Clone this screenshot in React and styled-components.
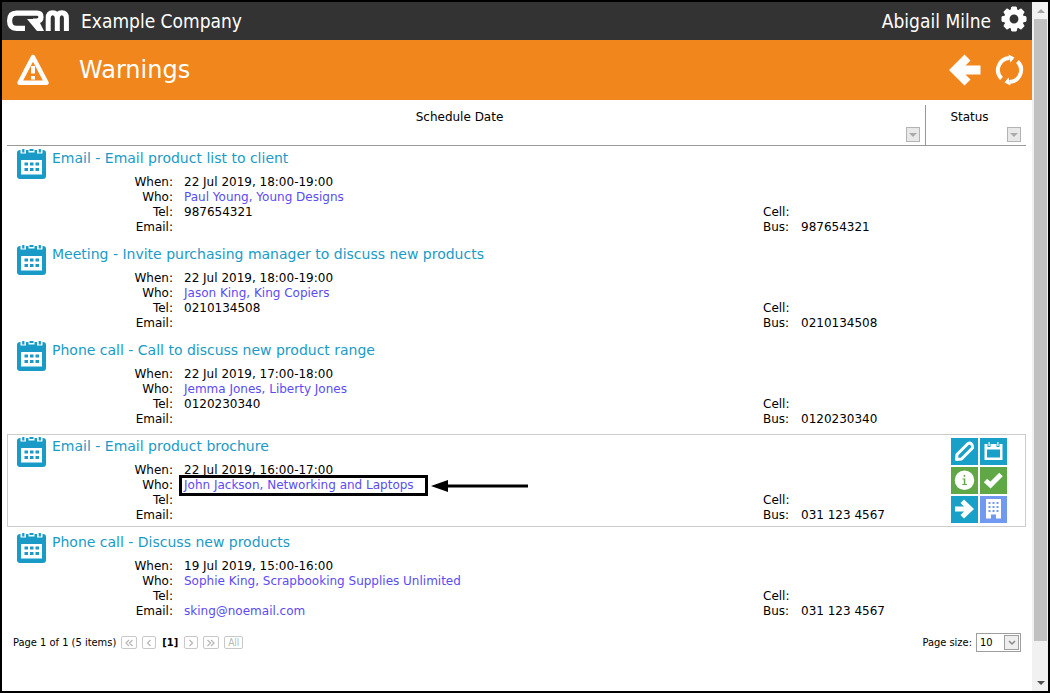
import React from 'react';
import styled, { createGlobalStyle } from 'styled-components';

const GlobalStyle = createGlobalStyle`
  * {
    box-sizing: border-box;
  }

  body {
    margin: 0;
    background: #fff;
    color: #000;
    font-family: Verdana, 'DejaVu Sans', sans-serif;
    font-size: 12px;
    line-height: 15px;
  }
`;

const compactFont = "Tahoma, 'DejaVu Sans Condensed', 'DejaVu Sans', sans-serif";

const Window = styled.div`
  display: flex;
  min-height: 100vh;
  border: 2px solid #000;
`;

const Main = styled.main`
  flex: 1;
  min-width: 0;
`;

const TopBar = styled.header`
  display: flex;
  align-items: center;
  height: 38px;
  padding: 0 5px;
  background: #333;
  color: #fff;
  font-family: ${compactFont};
  font-size: 19px;
  line-height: 24px;
`;

const Company = styled.span`
  flex: 1;
  margin-left: 12px;
`;

const IconButton = styled.button`
  display: flex;
  padding: 0;
  border: 0;
  background: none;
  color: #fff;
  cursor: pointer;
`;

const SettingsButton = styled(IconButton)`
  padding-bottom: 4px;
`;

const UserName = styled.span`
  margin-right: 10px;
`;

const TitleBar = styled.div`
  display: flex;
  align-items: center;
  gap: 14px;
  height: 60px;
  padding: 0 7px 0 15px;
  background: #f0861c;
  color: #fff;
`;

const PageTitle = styled.h1`
  flex: 1;
  margin: 0 0 0 16px;
  font-size: 24px;
  font-weight: normal;
  line-height: 30px;
`;

const Content = styled.div`
  padding: 5px 6px 0 5px;
`;

const Grid = styled.table`
  display: block;
`;

const GridHead = styled.thead`
  display: block;
`;

const GridBody = styled.tbody`
  display: block;
`;

const HeadRow = styled.tr`
  display: grid;
  grid-template-columns: 1fr 101px;
  height: 41px;
  border-bottom: 1px solid #999;
`;

const HeadCell = styled.th`
  display: flex;
  flex-direction: column;
  justify-content: space-between;
  padding: 5px 5px 3px;
  font-weight: normal;
  text-align: center;

  & + & {
    border-left: 1px solid #999;
  }
`;

const HeadLabel = styled.span`
  padding-right: 13px;
`;

const FilterButton = styled.button`
  display: flex;
  align-self: flex-end;
  align-items: center;
  justify-content: center;
  width: 14px;
  height: 15px;
  padding: 0;
  border: 1px solid #b4b4b4;
  background: #e8e8e8;
`;

const Row = styled.tr`
  display: grid;
  grid-template-columns: 1fr 101px;
  height: 93px;
  margin-bottom: 3px;
  border: 1px solid ${({ $selected }) => ($selected ? '#ccc' : 'transparent')};
`;

const ScheduleCell = styled.td`
  display: flex;
  gap: 5px;
  padding: 2px 0 0 9px;
`;

const ScheduleBody = styled.div`
  flex: 1;
`;

const ScheduleTitle = styled.a`
  display: block;
  margin-bottom: 8px;
  color: #1a9bc7;
  font-size: 14px;
  line-height: 18px;
  text-decoration: none;
`;

const Details = styled.div`
  display: grid;
  grid-template-columns: 121px 1fr 27px 123px;
  column-gap: 11px;
`;

const Label = styled.span`
  grid-column: ${({ $col }) => $col};
  text-align: ${({ $col }) => ($col === 1 ? 'right' : 'left')};
  white-space: nowrap;
`;

const Value = styled.span`
  position: relative;
  grid-column: ${({ $col }) => $col};
  justify-self: start;
  min-height: 15px;
`;

const TextLink = styled.a`
  color: #5b4bf5;
  text-decoration: none;
`;

const Highlight = styled.span`
  position: absolute;
  inset: -3px -14px -3px -5px;
  border: 3px solid #000;
  pointer-events: none;
`;

const Pointer = styled.svg`
  position: absolute;
  top: 1px;
  left: calc(100% + 17px);
`;

const StatusCell = styled.td`
  padding: 3px 0 0 27px;
`;

const Actions = styled.div`
  display: grid;
  grid-template-columns: 27px 27px;
  gap: 2px;
`;

const ActionButton = styled.button`
  display: flex;
  width: 27px;
  height: 27px;
  padding: 0;
  border: 0;
  background: ${({ $color }) => $color};
  cursor: pointer;
`;

const Footer = styled.footer`
  display: flex;
  align-items: center;
  justify-content: space-between;
  padding: 7px 5px 0 6px;
  font-family: ${compactFont};
  font-size: 11px;
`;

const Pager = styled.nav`
  display: flex;
  align-items: center;
  gap: 5px;
`;

const PageButton = styled.button`
  display: flex;
  align-items: center;
  justify-content: center;
  min-width: 14px;
  height: 13px;
  padding: 0 3px;
  border: 1px solid #c8c8c8;
  border-radius: 2px;
  background: #fff;
  color: #b8b8b8;
  font-family: inherit;
  font-size: 10px;
  line-height: 11px;
`;

const CurrentPage = styled.strong`
  padding: 0 1px;
`;

const PageSize = styled.label`
  display: flex;
  align-items: center;
  gap: 4px;
`;

const SelectBox = styled.span`
  position: relative;
  display: flex;
`;

const Select = styled.select`
  width: 45px;
  height: 19px;
  padding: 0 3px;
  border: 1px solid #9f9f9f;
  border-radius: 0;
  background: #fff;
  color: #000;
  font: inherit;
  appearance: none;
`;

const SelectArrow = styled.span`
  position: absolute;
  top: 2px;
  right: 2px;
  display: flex;
  align-items: center;
  justify-content: center;
  width: 15px;
  height: 15px;
  border: 1px solid #9f9f9f;
  background: #eee;
  pointer-events: none;
`;

const ScrollTrack = styled.div`
  display: flex;
  flex-direction: column;
  width: 16px;
  padding: 0 1px 0 2px;
  background: #f1f1f1;
`;

const ScrollArrow = styled.div`
  display: flex;
  align-items: center;
  justify-content: center;
  height: 17px;
`;

const ScrollRail = styled.div`
  flex: 1;
`;

const ScrollThumb = styled.div`
  height: 95%;
  background: #c1c1c1;
`;

const items = [
  {
    title: 'Email - Email product list to client',
    when: '22 Jul 2019, 18:00-19:00',
    who: 'Paul Young, Young Designs',
    tel: '987654321',
    bus: '987654321',
  },
  {
    title: 'Meeting - Invite purchasing manager to discuss new products',
    when: '22 Jul 2019, 18:00-19:00',
    who: 'Jason King, King Copiers',
    tel: '0210134508',
    bus: '0210134508',
  },
  {
    title: 'Phone call - Call to discuss new product range',
    when: '22 Jul 2019, 17:00-18:00',
    who: 'Jemma Jones, Liberty Jones',
    tel: '0120230340',
    bus: '0120230340',
  },
  {
    title: 'Email - Email product brochure',
    when: '22 Jul 2019, 16:00-17:00',
    who: 'John Jackson, Networking and Laptops',
    bus: '031 123 4567',
    selected: true,
  },
  {
    title: 'Phone call - Discuss new products',
    when: '19 Jul 2019, 15:00-16:00',
    who: 'Sophie King, Scrapbooking Supplies Unlimited',
    email: 'sking@noemail.com',
    bus: '031 123 4567',
  },
];

const Logo = () => (
  <svg width="62" height="22" viewBox="0 0 62 22" fill="none" stroke="#fff" strokeWidth="5.2">
    <path d="M18 18.400H9.500Q2.600 18.400 2.600 10.800T9.500 3.200H30Q34 3.200 34 7T30 11H26" />
    <path d="M20 9H31L37 21H30Z" fill="#fff" stroke="none" />
    <path d="M41.200 21V8Q41.200 2.800 45.700 2.800T50.300 8V21M50.300 8Q50.300 2.800 54.800 2.800T59.400 8V21" strokeWidth="5" />
  </svg>
);

const GearIcon = () => (
  <svg width="26" height="26" viewBox="0 0 26 26" fill="none" stroke="#fff">
    <circle cx="13" cy="13" r="7.200" strokeWidth="5.500" />
    {[0, 45, 90, 135, 180, 225, 270, 315].map((angle) => (
      <path key={angle} d="M10 4.500L10.800 1H15.200L16 4.500Z" fill="#fff" strokeWidth="1" strokeLinejoin="round" transform={`rotate(${angle} 13 13)`} />
    ))}
  </svg>
);

const WarningIcon = () => (
  <svg width="32" height="32" viewBox="0 0 32 32" fill="none" stroke="#fff" strokeLinejoin="round">
    <path d="M16 3L29.500 28.800H2.500Z" strokeWidth="4.400" />
    <path d="M16 12V19.500M16 22V25.500" strokeWidth="4" />
  </svg>
);

const BackIcon = () => (
  <svg width="32" height="32" viewBox="0 0 32 32" fill="#fff">
    <path d="M0 16L15.500 0.500L21.500 6.500L16.500 11.500H31.500V20.500H16.500L21.500 25.500L15.500 31.500Z" />
  </svg>
);

const RefreshIcon = () => (
  <svg width="30" height="32" viewBox="0 0 30 32" fill="none">
    <path d="M6.500 24.500A12 12 0 0 1 14.500 4M22.500 7.500A12 12 0 0 1 14.500 28" stroke="#fff" strokeWidth="4" />
    <path d="M13.500 0.500L19.500 3.500L15.500 8.500ZM15.500 31.500L9.500 28.500L13.500 23.500Z" fill="#fff" />
  </svg>
);

const CalendarIcon = () => (
  <svg width="30" height="31" viewBox="0 0 30 31">
    <rect y="1" width="29" height="29" rx="3" fill="#1a9bc7" />
    <rect x="4" y="11" width="21" height="14.500" fill="#fff" />
    <path d="M3.500 0H9V4.500H3.500ZM20 0H25.500V4.500H20ZM11.500 0H17.500V3.500H11.500Z" fill="#fff" />
    <path d="M5.200 0H7.400V3.500H5.200ZM21.700 0H23.900V3.500H21.700ZM12.500 0H16.500V2H12.500Z" fill="#1a9bc7" />
    <path d="M7.500 13.500H11V16.500H7.500ZM13 13.500H16.500V16.500H13ZM18.500 13.500H22V16.500H18.500ZM7.500 19H11V22H7.500ZM13 19H16.500V22H13ZM18.500 19H22V22H18.500Z" fill="#1a9bc7" />
  </svg>
);

const actions = [
  {
    name: 'Edit',
    color: '#18a0c9',
    icon: <path d="M5.500 21.500L6 16.500L17 5.500Q19 4.500 20.500 6T21.500 10L10.500 21Z" fill="none" stroke="#fff" strokeWidth="3" strokeLinejoin="round" />,
  },
  {
    name: 'Reschedule',
    color: '#18a0c9',
    icon: <path d="M4.500 6H7.500V9H10.500V6H16.500V9H19.500V6H22.500V22H4.500ZM7 11.500V19.500H20V11.500ZM8.500 4H9.700V8H8.500ZM17.300 4H18.500V8H17.300Z" fill="#fff" fillRule="evenodd" />,
  },
  {
    name: 'Information',
    color: '#5fa845',
    icon: <path d="M13.500 3.500A9.700 9.700 0 1 1 13.500 23A9.700 9.700 0 1 1 13.500 3.500ZM12.700 8V9.800H14.300V8ZM11.500 11.500V12.500H12.800V17H11.200V18H16V17H14.300V11.500Z" fill="#fff" fillRule="evenodd" />,
  },
  {
    name: 'Complete',
    color: '#5fa845',
    icon: <path d="M5.500 13.500L10.500 18L21 7.500" fill="none" stroke="#fff" strokeWidth="5" />,
  },
  {
    name: 'Follow up',
    color: '#18a0c9',
    icon: <path d="M4 10.500H13L9.500 7L13 3.500L23 13L13 22.500L9.500 19L13 15.500H4Z" fill="#fff" />,
  },
  {
    name: 'Company',
    color: '#7299f2',
    icon: <path d="M6 3H21V22.500H16V18.500H11V22.500H6ZM8.500 6H10.500V8H8.500ZM12.500 6H14.500V8H12.500ZM16.500 6H18.500V8H16.500ZM8.500 10H10.500V12H8.500ZM12.500 10H14.500V12H12.500ZM16.500 10H18.500V12H16.500ZM8.500 14H10.500V16H8.500ZM12.500 14H14.500V16H12.500ZM16.500 14H18.500V16H16.500Z" fill="#fff" fillRule="evenodd" />,
  },
];

const Filter = ({ label }) => (
  <FilterButton type="button" aria-label={label}>
    <svg width="8" height="4" viewBox="0 0 8 4"><path d="M0 0H8L4 4Z" fill="#aaa" /></svg>
  </FilterButton>
);

const Chevrons = ({ d, width = 8 }) => (
  <svg width={width} height="8" viewBox={`0 0 ${width} 8`} fill="none" stroke="#b8b8b8" strokeWidth="1.300">
    <path d={d} />
  </svg>
);

function ScheduleRow({ item }) {
  return (
    <Row $selected={item.selected}>
      <ScheduleCell>
        <CalendarIcon />
        <ScheduleBody>
          <ScheduleTitle href="#schedule">{item.title}</ScheduleTitle>
          <Details>
            <Label $col={1}>When:</Label>
            <Value $col={2}>{item.when}</Value>
            <Label $col={1}>Who:</Label>
            <Value $col={2}>
              <TextLink href="#contact">{item.who}</TextLink>
              {item.selected && (
                <>
                  <Highlight />
                  <Pointer width="97" height="14" viewBox="0 0 97 14">
                    <path d="M0 7L17 1V5.500H97V8.500H17V13Z" />
                  </Pointer>
                </>
              )}
            </Value>
            <Label $col={1}>Tel:</Label>
            <Value $col={2}>{item.tel}</Value>
            <Label $col={3}>Cell:</Label>
            <Label $col={1}>Email:</Label>
            <Value $col={2}>{item.email && <TextLink href={`mailto:${item.email}`}>{item.email}</TextLink>}</Value>
            <Label $col={3}>Bus:</Label>
            <Value $col={4}>{item.bus}</Value>
          </Details>
        </ScheduleBody>
      </ScheduleCell>
      <StatusCell>
        {item.selected && (
          <Actions>
            {actions.map((action) => (
              <ActionButton key={action.name} type="button" aria-label={action.name} $color={action.color}>
                <svg width="27" height="27" viewBox="0 0 27 27">{action.icon}</svg>
              </ActionButton>
            ))}
          </Actions>
        )}
      </StatusCell>
    </Row>
  );
}

function App() {
  return (
    <>
      <GlobalStyle />
      <Window>
        <Main>
          <TopBar>
            <Logo />
            <Company>Example Company</Company>
            <UserName>Abigail Milne</UserName>
            <SettingsButton type="button" aria-label="Settings"><GearIcon /></SettingsButton>
          </TopBar>
          <TitleBar>
            <WarningIcon />
            <PageTitle>Warnings</PageTitle>
            <IconButton type="button" aria-label="Back"><BackIcon /></IconButton>
            <IconButton type="button" aria-label="Refresh"><RefreshIcon /></IconButton>
          </TitleBar>
          <Content>
            <Grid>
              <GridHead>
                <HeadRow>
                  <HeadCell scope="col">
                    <HeadLabel>Schedule Date</HeadLabel>
                    <Filter label="Filter by schedule date" />
                  </HeadCell>
                  <HeadCell scope="col">
                    <HeadLabel>Status</HeadLabel>
                    <Filter label="Filter by status" />
                  </HeadCell>
                </HeadRow>
              </GridHead>
              <GridBody>
                {items.map((item) => (
                  <ScheduleRow key={item.title} item={item} />
                ))}
              </GridBody>
            </Grid>
            <Footer>
              <Pager aria-label="Pages">
                <span>Page 1 of 1 (5 items)</span>
                <PageButton type="button" aria-label="First page"><Chevrons d="M4 1L1 4L4 7M7.500 1L4.500 4L7.500 7" /></PageButton>
                <PageButton type="button" aria-label="Previous page"><Chevrons width={6} d="M4.500 1L1.500 4L4.500 7" /></PageButton>
                <CurrentPage>[1]</CurrentPage>
                <PageButton type="button" aria-label="Next page"><Chevrons width={6} d="M1.500 1L4.500 4L1.500 7" /></PageButton>
                <PageButton type="button" aria-label="Last page"><Chevrons d="M0.500 1L3.500 4L0.500 7M4 1L7 4L4 7" /></PageButton>
                <PageButton type="button">All</PageButton>
              </Pager>
              <PageSize>
                Page size:
                <SelectBox>
                  <Select defaultValue="10">
                    <option>10</option>
                    <option>20</option>
                    <option>50</option>
                  </Select>
                  <SelectArrow>
                    <svg width="8" height="6" viewBox="0 0 8 6" fill="none" stroke="#888" strokeWidth="1.500"><path d="M1 1L4 4L7 1" /></svg>
                  </SelectArrow>
                </SelectBox>
              </PageSize>
            </Footer>
          </Content>
        </Main>
        <ScrollTrack aria-hidden="true">
          <ScrollArrow>
            <svg width="8" height="4" viewBox="0 0 8 4"><path d="M0 4H8L4 0Z" fill="#a3a3a3" /></svg>
          </ScrollArrow>
          <ScrollRail><ScrollThumb /></ScrollRail>
          <ScrollArrow>
            <svg width="8" height="4" viewBox="0 0 8 4"><path d="M0 0H8L4 4Z" fill="#505050" /></svg>
          </ScrollArrow>
        </ScrollTrack>
      </Window>
    </>
  );
}

export default App;
